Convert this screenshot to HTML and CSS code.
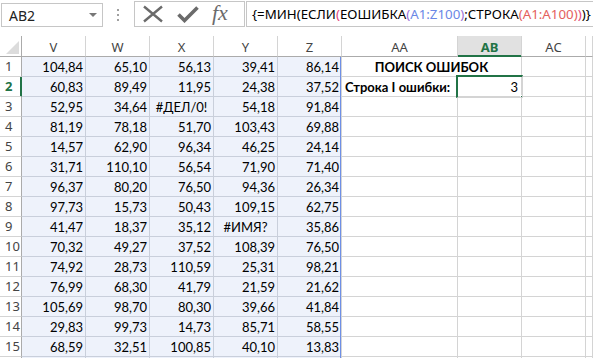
FILE: index.html
```html
<!DOCTYPE html>
<html>
<head>
<meta charset="utf-8">
<link rel="stylesheet" href="styles.css">
</head>
<body>
<div class="toolbar">
  <div class="namebox"><span>AB2</span><span class="caret"></span></div>
  <div class="dots"><i></i><i></i><i></i></div>
  <div class="btns">
    <svg class="ico" width="22" height="18" viewBox="0 0 22 18"><path d="M2 1.5 L20 16.5 M20 1.5 L2 16.5" stroke="#6b6b6b" stroke-width="2.4" fill="none"/></svg>
    <svg class="ico" width="22" height="18" viewBox="0 0 22 18"><path d="M1.5 9.5 L7.5 15.5 L20.5 2.5" stroke="#6b6b6b" stroke-width="3.6" fill="none"/></svg>
    <span class="fx">fx</span>
  </div>
  <div class="formula">{=МИН(ЕСЛИ<span class="p1">(</span>ЕОШИБКА<span class="p2">(</span><span class="r1">A1:Z100</span><span class="p2">)</span>;СТРОКА<span class="r2">(A1:A100)</span><span class="p1">)</span>)}</div>
</div>
<div class="sheet">
  <div class="hd corner"><span class="tri"></span></div>
  <div class="hd">V</div><div class="hd">W</div><div class="hd">X</div><div class="hd">Y</div><div class="hd">Z</div><div class="hd">AA</div><div class="hd sel">AB</div><div class="hd">AC</div><div class="hd"></div>

  <div class="rn">1</div><div class="c">104,84</div><div class="c">65,10</div><div class="c">56,13</div><div class="c">39,41</div><div class="c">86,14</div><div class="w title">ПОИСК ОШИБОК</div><div class="w"></div><div class="w"></div>
  <div class="rn sel">2</div><div class="c">60,83</div><div class="c">89,49</div><div class="c">11,95</div><div class="c">24,38</div><div class="c">37,52</div><div class="w lbl">Строка I ошибки:</div><div class="w num">3</div><div class="w"></div><div class="w"></div>
  <div class="rn">3</div><div class="c">52,95</div><div class="c">34,64</div><div class="c err">#ДЕЛ/0!</div><div class="c">54,18</div><div class="c">91,84</div><div class="w"></div><div class="w"></div><div class="w"></div><div class="w"></div>
  <div class="rn">4</div><div class="c">81,19</div><div class="c">78,18</div><div class="c">51,70</div><div class="c">103,43</div><div class="c">69,88</div><div class="w"></div><div class="w"></div><div class="w"></div><div class="w"></div>
  <div class="rn">5</div><div class="c">14,57</div><div class="c">62,90</div><div class="c">96,34</div><div class="c">46,25</div><div class="c">24,14</div><div class="w"></div><div class="w"></div><div class="w"></div><div class="w"></div>
  <div class="rn">6</div><div class="c">31,71</div><div class="c">110,10</div><div class="c">56,54</div><div class="c">71,90</div><div class="c">71,40</div><div class="w"></div><div class="w"></div><div class="w"></div><div class="w"></div>
  <div class="rn">7</div><div class="c">96,37</div><div class="c">80,20</div><div class="c">76,50</div><div class="c">94,36</div><div class="c">26,34</div><div class="w"></div><div class="w"></div><div class="w"></div><div class="w"></div>
  <div class="rn">8</div><div class="c">97,73</div><div class="c">15,73</div><div class="c">50,43</div><div class="c">109,15</div><div class="c">62,75</div><div class="w"></div><div class="w"></div><div class="w"></div><div class="w"></div>
  <div class="rn">9</div><div class="c">41,47</div><div class="c">18,37</div><div class="c">35,12</div><div class="c err">#ИМЯ?</div><div class="c">35,86</div><div class="w"></div><div class="w"></div><div class="w"></div><div class="w"></div>
  <div class="rn">10</div><div class="c">70,32</div><div class="c">49,27</div><div class="c">37,52</div><div class="c">108,39</div><div class="c">76,50</div><div class="w"></div><div class="w"></div><div class="w"></div><div class="w"></div>
  <div class="rn">11</div><div class="c">74,92</div><div class="c">28,73</div><div class="c">110,59</div><div class="c">25,31</div><div class="c">98,21</div><div class="w"></div><div class="w"></div><div class="w"></div><div class="w"></div>
  <div class="rn">12</div><div class="c">76,99</div><div class="c">68,30</div><div class="c">41,79</div><div class="c">21,59</div><div class="c">21,62</div><div class="w"></div><div class="w"></div><div class="w"></div><div class="w"></div>
  <div class="rn">13</div><div class="c">105,69</div><div class="c">98,70</div><div class="c">80,30</div><div class="c">39,66</div><div class="c">41,84</div><div class="w"></div><div class="w"></div><div class="w"></div><div class="w"></div>
  <div class="rn">14</div><div class="c">29,83</div><div class="c">99,73</div><div class="c">14,73</div><div class="c">85,71</div><div class="c">58,55</div><div class="w"></div><div class="w"></div><div class="w"></div><div class="w"></div>
  <div class="rn">15</div><div class="c">68,59</div><div class="c">32,51</div><div class="c">100,85</div><div class="c">40,10</div><div class="c">13,83</div><div class="w"></div><div class="w"></div><div class="w"></div><div class="w"></div>
  <div class="rn"></div><div class="c"></div><div class="c"></div><div class="c"></div><div class="c"></div><div class="c"></div><div class="w"></div><div class="w"></div><div class="w"></div><div class="w"></div>

  <div class="range"><span class="handle"></span></div>
  <div class="cursor"><span class="fill"></span></div>
</div>
</body>
</html>
```
FILE: styles.css
```css
* { box-sizing: border-box; }
body {
  margin: 0;
  width: 593px;
  height: 358px;
  overflow: hidden;
  background: #fff;
  font-family: Lato, "Noto Sans", sans-serif;
}
.toolbar {
  height: 36px;
  display: flex;
  align-items: flex-start;
}
.namebox {
  margin: 3px 0 0 1px;
  width: 102px;
  height: 24px;
  border: 1px solid #c6c6c6;
  display: flex;
  align-items: center;
  justify-content: space-between;
  padding: 0 5px 0 7px;
  font-family: "Noto Sans", sans-serif;
  font-size: 14px;
  color: #222;
}
.caret {
  width: 0; height: 0;
  border-left: 4px solid transparent;
  border-right: 4px solid transparent;
  border-top: 4px solid #777;
}
.dots {
  margin: 9px 0 0 14px;
  width: 2px;
  display: flex;
  flex-direction: column;
  gap: 3px;
}
.dots i { display: block; width: 2px; height: 2px; background: #a0a0a0; }
.btns {
  margin: 1px 0 0 15px;
  width: 111px;
  height: 26px;
  border: 1px solid #c6c6c6;
  display: flex;
  align-items: center;
  padding-left: 7px;
  gap: 13px;
}
.fx {
  font-family: "Liberation Serif", serif;
  font-style: italic;
  font-size: 22px;
  color: #6b6b6b;
  line-height: 1;
  margin-top: -3px;
}
.formula {
  margin: 1px 0 0 1px;
  flex: 1;
  height: 26px;
  border: 1px solid #c6c6c6;
  border-right: none;
  padding-left: 5px;
  font-family: "Noto Sans", sans-serif;
  font-size: 13.3px;
  line-height: 24px;
  color: #000;
  white-space: nowrap;
  overflow: hidden;
}
.p1 { color: #e2467c; }
.p2 { color: #9a6fd8; }
.r1 { color: #6a87e6; }
.r2 { color: #e4605c; }

.sheet {
  position: relative;
  display: grid;
  grid-template-columns: 22px repeat(5, 64px) 116px 64px 64px 1fr;
  grid-template-rows: 21px;
  grid-auto-rows: 20px;
}
.sheet > div {
  border-right: 1px solid #d4d4d4;
  border-bottom: 1px solid #d4d4d4;
  font-size: 13px;
  white-space: nowrap;
  overflow: hidden;
}
.sheet > .hd {
  border-bottom-color: #ababab;
  font-family: "Noto Sans", sans-serif;
  color: #444;
  display: flex;
  align-items: center;
  justify-content: center;
  padding-top: 1px;
}
.sheet > .corner { border-right-color: #ababab; position: relative; }
.tri {
  position: absolute;
  right: 2px; bottom: 2px;
  width: 0; height: 0;
  border-left: 13px solid transparent;
  border-bottom: 13px solid #dcdcdc;
}
.sheet > .hd.sel {
  background: #e1e1e1;
  color: #217346;
  font-weight: bold;
  border-bottom-color: #217346;
  box-shadow: inset 0 -1px #217346;
}
.sheet > .rn {
  border-right-color: #ababab;
  font-family: "Noto Sans", sans-serif;
  color: #444;
  padding-left: 5px;
  line-height: 19px;
}
.sheet > .rn.sel {
  color: #217346;
  font-weight: bold;
  border-right-color: #217346;
  box-shadow: inset -1px 0 #217346;
}
.sheet > .c {
  background: #eef2fb;
  border-color: #c9cfdb;
  text-align: right;
  padding-right: 2px;
  line-height: 21px;
  color: #000;
}
.sheet > .c.err { text-align: center; padding-right: 0; }
.sheet > .w { line-height: 21px; color: #000; }
.sheet > .title {
  grid-column: span 2;
  text-align: center;
  font-weight: bold;
}
.sheet > .lbl { font-weight: bold; padding-left: 3px; }
.sheet > .num { text-align: right; padding-right: 3px; }

.range {
  position: absolute;
  left: 340px;
  top: 21px;
  width: 2px;
  bottom: 0;
  background: #6e8fe6;
}
.handle {
  position: absolute;
  left: -2px; top: -2px;
  width: 6px; height: 4px;
  background: #6e8fe6;
}
.cursor {
  position: absolute;
  left: 456px;
  top: 39px;
  width: 67px;
  height: 23px;
  border: 2px solid #217346;
}
.fill {
  position: absolute;
  right: -5px; bottom: -5px;
  width: 7px; height: 7px;
  background: #217346;
  border: 1px solid #fff;
}
```
